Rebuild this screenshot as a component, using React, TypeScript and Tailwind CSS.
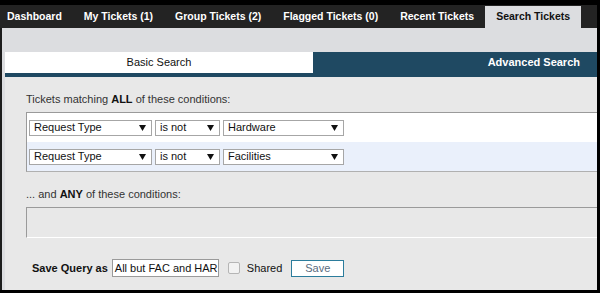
import { ReactNode } from "react";

const font = { fontFamily: '"Liberation Sans", Arial, sans-serif' };

const tabs = ["Dashboard", "My Tickets (1)", "Group Tickets (2)", "Flagged Tickets (0)", "Recent Tickets"];

function Arrow() {
  return (
    <svg width="7" height="6" viewBox="0 0 7 6" className="shrink-0">
      <polygon points="0,0 7,0 3.5,6" fill="#111" />
    </svg>
  );
}

function Select({ value, width }: { value: string; width: string }) {
  return (
    <div
      className={`${width} h-[16px] bg-white border border-[#a6a6a6] flex items-center justify-between pl-[4px] pr-[5px] text-[11px] text-[#111] leading-none`}
    >
      <span>{value}</span>
      <Arrow />
    </div>
  );
}

function ConditionRow({ field, op, value, bg }: { field: string; op: string; value: string; bg: string }) {
  return (
    <div className={`h-[29px] ${bg} flex items-center gap-[3px] pl-[2px]`}>
      <Select value={field} width="w-[123px]" />
      <Select value={op} width="w-[65px]" />
      <Select value={value} width="w-[121px]" />
    </div>
  );
}

function Label({ children }: { children: ReactNode }) {
  return <div className="h-[14px] leading-[14px] text-[11px] text-[#333]">{children}</div>;
}

export default function App() {
  return (
    <div style={font} className="w-[600px] h-[293px] bg-black pt-[5px] pr-[3px] pb-[3px] flex flex-col">
      {/* top nav */}
      <div className="h-[23px] bg-[#232323] flex items-stretch text-[10.5px] font-bold shrink-0 whitespace-nowrap">
        {tabs.map((t, i) => (
          <div
            key={t}
            className={`flex items-center text-white ${i === 0 ? "pl-[7px] pr-[11px]" : "px-[11px]"}`}
          >
            {t}
          </div>
        ))}
        <div className="flex items-center px-[11px] mt-[1px] bg-[#dcdde0] text-[#111]">Search Tickets</div>
      </div>

      <div className="flex-1 flex flex-col bg-[#dcdde0] border-l-2 border-[#1c1c1c]">
        <div className="h-[24px] shrink-0" />
        <div className="pl-[3px] flex flex-col flex-1">
          <div className="flex h-[21px] shrink-0">
            <div className="w-[308px] bg-white flex items-center justify-center text-[11px] text-[#111]">
              Basic Search
            </div>
            <div className="flex-1 bg-[#1f4962] flex items-center justify-end pr-[17px] text-[11px] font-bold text-white">
              Advanced Search
            </div>
          </div>
          <div className="h-[4px] bg-[#1f4962] shrink-0" />

          <div className="flex-1 bg-[#e8e8e8] pl-[21px] pt-[15px] flex flex-col">
            <Label>
              Tickets matching <b className="text-[#111]">ALL</b> of these conditions:
            </Label>
            <div className="mt-[6px] border-t border-l border-[#9a9a9a] border-b border-b-[#b0b0b0]">
              <ConditionRow field="Request Type" op="is not" value="Hardware" bg="bg-white" />
              <ConditionRow field="Request Type" op="is not" value="Facilities" bg="bg-[#eaf0fb]" />
            </div>

            <div className="mt-[15px]">
              <Label>
                ... and <b className="text-[#111]">ANY</b> of these conditions:
              </Label>
            </div>
            <div className="mt-[6px] h-[31px] border-t border-l border-[#9a9a9a] border-b border-b-white" />

            <div className="mt-[21px] ml-[6px] h-[18px] flex items-center text-[11px] text-[#111]">
              <span className="font-bold">Save Query as</span>
              <div className="ml-[4px] w-[107px] h-[18px] bg-white border border-[#9a9a9a] flex items-center pl-[2px] overflow-hidden whitespace-nowrap">
                All but FAC and HAR
              </div>
              <div className="ml-[9px] w-[12px] h-[12px] rounded-[2px] border border-[#b5b5b5] bg-[#f2f2f2]" />
              <span className="ml-[7px]">Shared</span>
              <button className="ml-[9px] w-[53px] h-[17px] bg-white border-[1.5px] border-[#2b7c9c] text-[11px] text-[#5b6b80] flex items-center justify-center">
                Save
              </button>
            </div>
          </div>
        </div>
      </div>
    </div>
  );
}
